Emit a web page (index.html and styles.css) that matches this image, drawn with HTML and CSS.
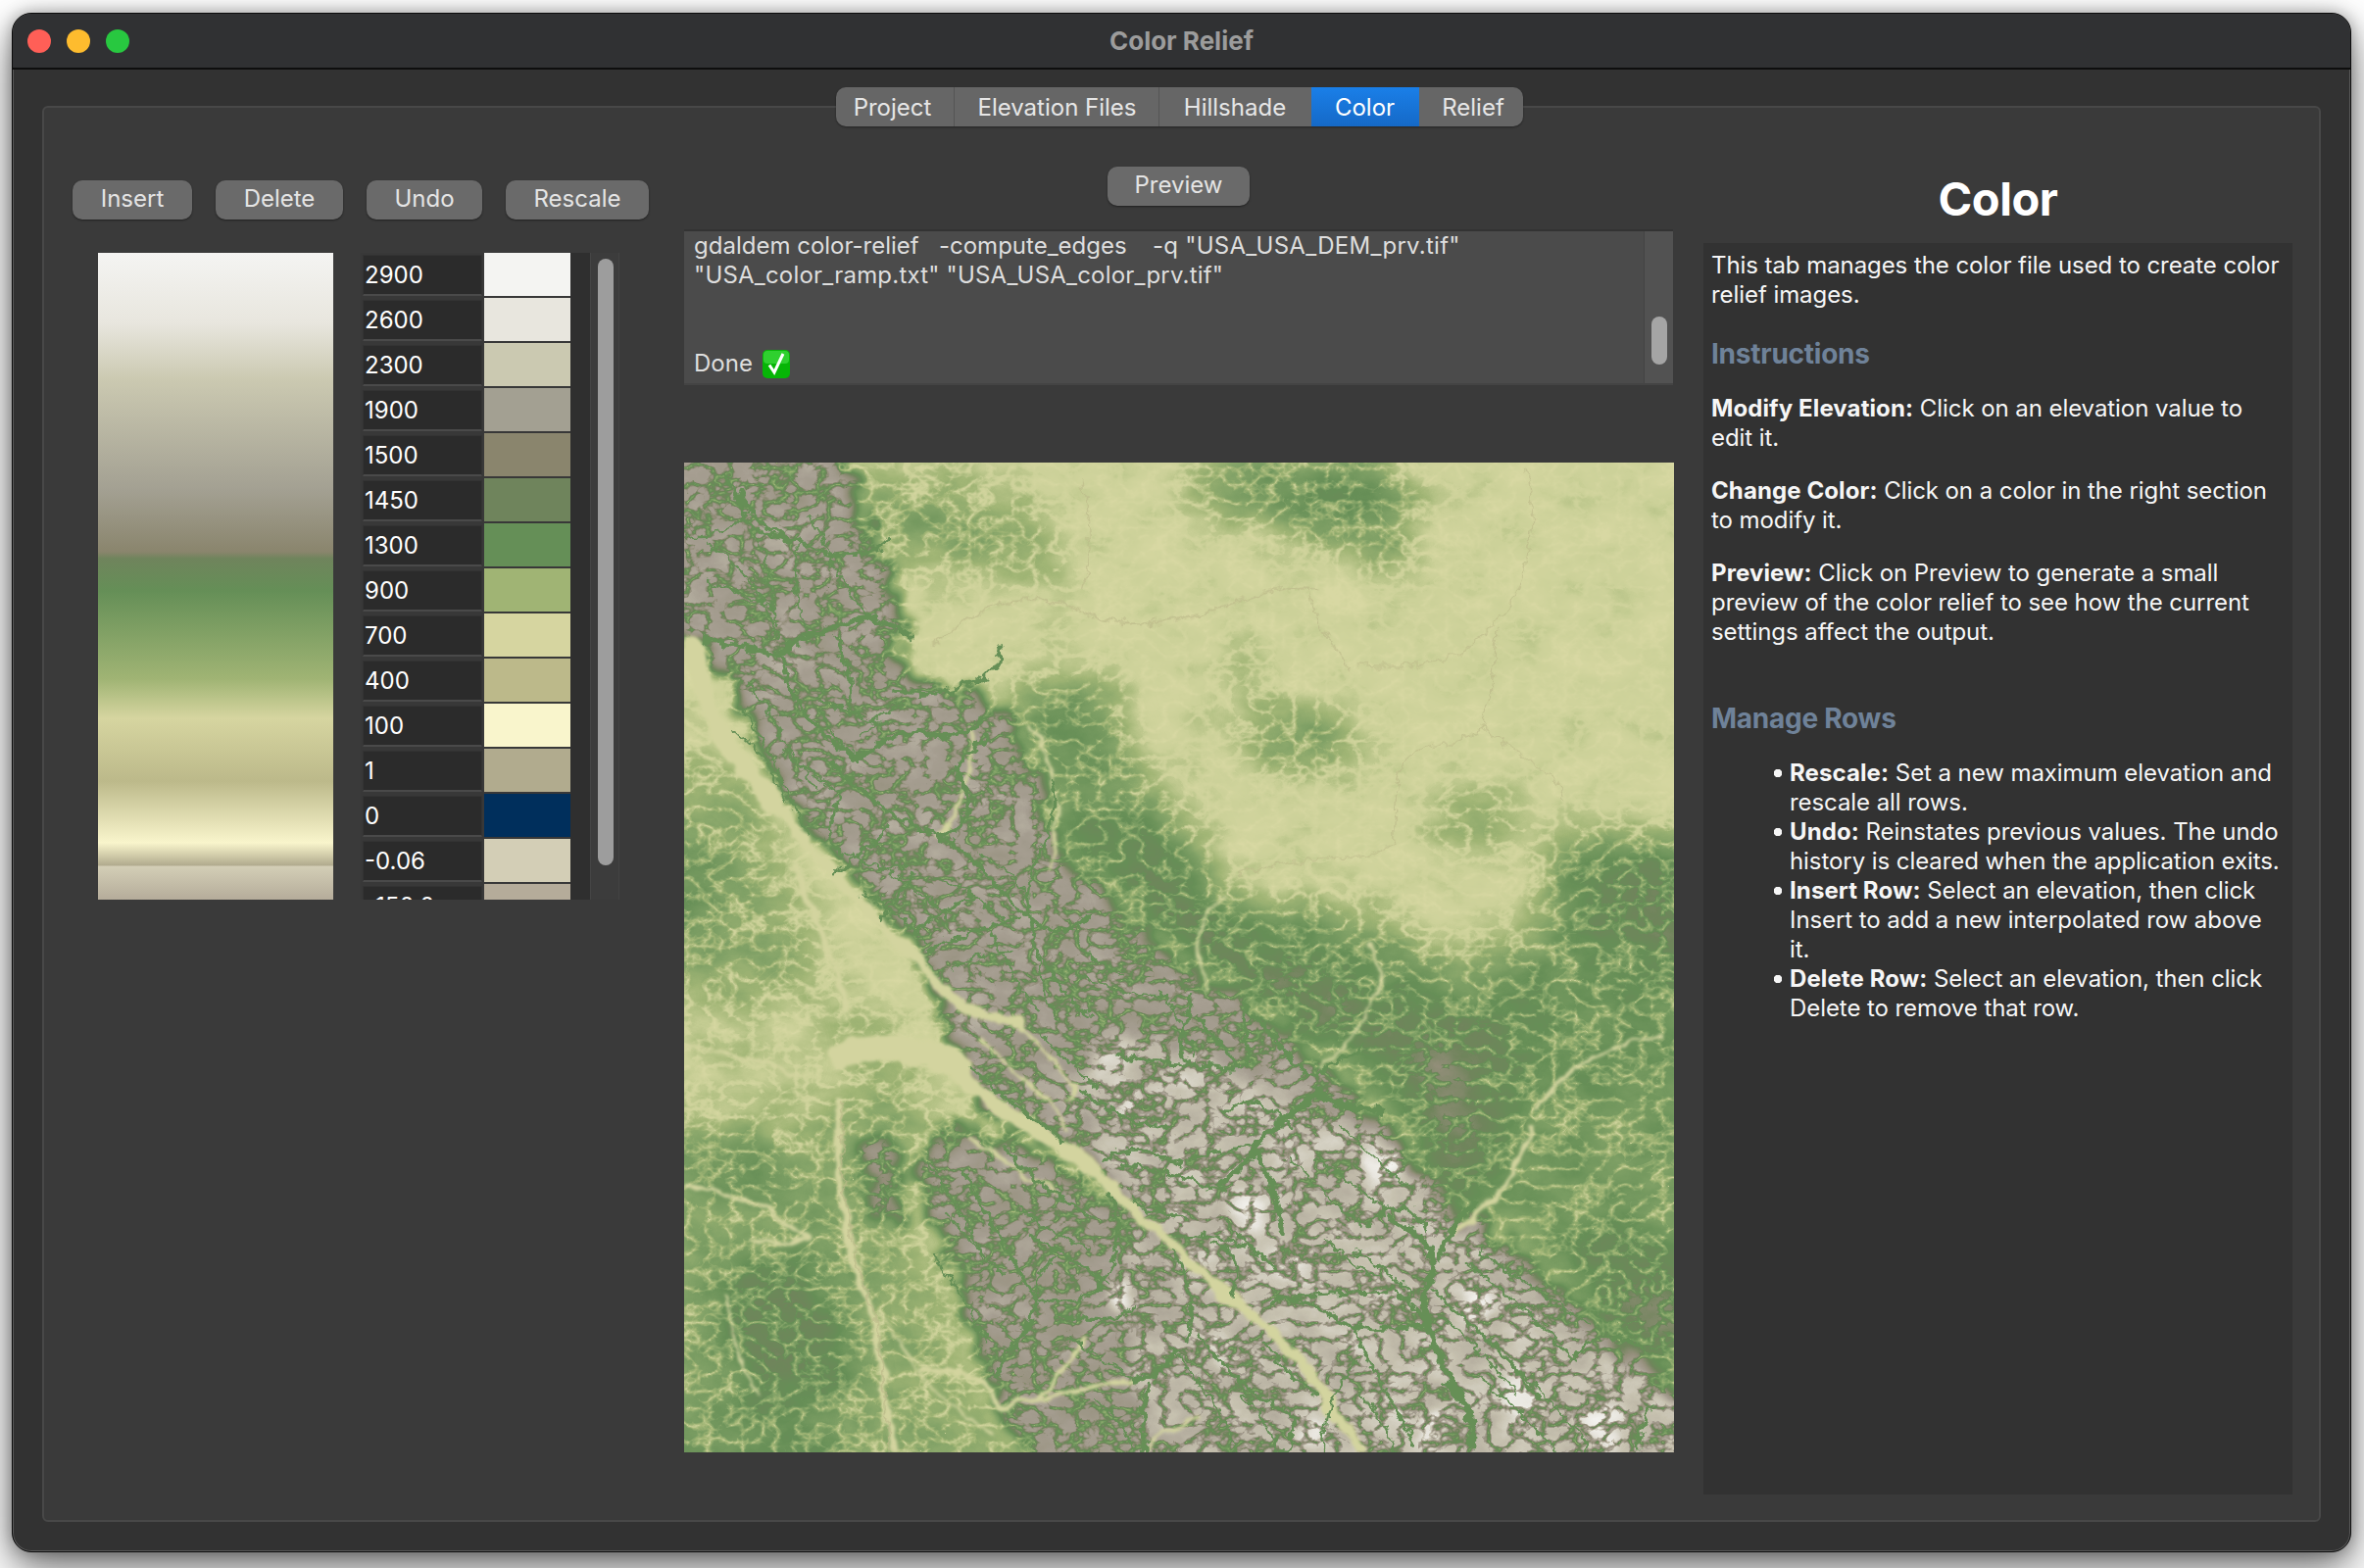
FILE: index.html
```html
<!DOCTYPE html>
<html lang="en">
<head>
<meta charset="utf-8">
<title>Color Relief</title>
<link rel="stylesheet" href="styles.css">
</head>
<body>
<div class="window">
  <header class="titlebar">
    <div class="lights"><span class="light red"></span><span class="light yellow"></span><span class="light green"></span></div>
    <div class="title">Color Relief</div>
  </header>
  <main class="content">
    <div class="group">
      <nav class="tabs">
        <span class="tab t1">Project</span><span class="tab t2">Elevation Files</span><span class="tab t3">Hillshade</span><span class="tab t4 active">Color</span><span class="tab t5">Relief</span>
      </nav>
      <div class="columns">
        <section class="left">
          <div class="buttons">
            <button class="btn b-insert">Insert</button>
            <button class="btn b-delete">Delete</button>
            <button class="btn b-undo">Undo</button>
            <button class="btn b-rescale">Rescale</button>
          </div>
          <div class="ramp">
            <div class="gradient"></div>
            <div class="table">
              <div class="rows">
                <div class="row"><span class="cell">2900</span><span class="swatch c01"></span></div>
                <div class="row"><span class="cell">2600</span><span class="swatch c02"></span></div>
                <div class="row"><span class="cell">2300</span><span class="swatch c03"></span></div>
                <div class="row"><span class="cell">1900</span><span class="swatch c04"></span></div>
                <div class="row"><span class="cell">1500</span><span class="swatch c05"></span></div>
                <div class="row"><span class="cell">1450</span><span class="swatch c06"></span></div>
                <div class="row"><span class="cell">1300</span><span class="swatch c07"></span></div>
                <div class="row"><span class="cell">900</span><span class="swatch c08"></span></div>
                <div class="row"><span class="cell">700</span><span class="swatch c09"></span></div>
                <div class="row"><span class="cell">400</span><span class="swatch c10"></span></div>
                <div class="row"><span class="cell">100</span><span class="swatch c11"></span></div>
                <div class="row"><span class="cell">1</span><span class="swatch c12"></span></div>
                <div class="row"><span class="cell">0</span><span class="swatch c13"></span></div>
                <div class="row"><span class="cell">-0.06</span><span class="swatch c14"></span></div>
                <div class="row"><span class="cell">-150.0</span><span class="swatch c15"></span></div>
              </div>
              <div class="gutter"></div>
              <div class="vscroll"><div class="vthumb"></div></div>
            </div>
          </div>
        </section>
        <section class="middle">
          <button class="btn b-preview">Preview</button>
          <div class="log">
            <div class="log-text">
              <div>gdaldem color-relief &nbsp;&nbsp;-compute_edges &nbsp;&nbsp;<span class="wide">-q "USA_USA_DEM_prv.tif"</span></div>
              <div class="line2">"USA_color_ramp.txt" "USA_USA_color_prv.tif"</div>
              <div class="done">Done
                <svg class="check" viewBox="0 0 28 29" aria-hidden="true"><rect width="28" height="29" rx="5" fill="#06b506"/><rect x="1" y="1" width="26" height="13" rx="4" fill="#2fd02f"/><path d="M7 15.5l5 7.5L21 4" fill="none" stroke="#fff" stroke-width="3"/></svg>
              </div>
            </div>
            <div class="log-scroll"><div class="log-thumb"></div></div>
          </div>
          <svg class="map" viewBox="27 18 1523 1523" aria-label="Color relief preview">
            <defs>
              <filter id="terrain" filterUnits="userSpaceOnUse" x="27" y="18" width="1523" height="1523" color-interpolation-filters="sRGB">
                <feTurbulence type="turbulence" baseFrequency="0.03 0.038" numOctaves="3" seed="11" result="t"/>
                <feColorMatrix in="t" type="matrix" values="3 0 0 0 0 3 0 0 0 0 3 0 0 0 0 0 0 0 0 1" result="n"/>
                <feComposite in="SourceGraphic" in2="n" operator="arithmetic" k1="0.72" k2="0.35" k3="0" k4="0" result="h0"/>
                <feTurbulence type="fractalNoise" baseFrequency="0.014 0.02" numOctaves="5" seed="21" result="f"/>
                <feColorMatrix in="f" type="matrix" values="1 0 0 0 0 1 0 0 0 0 1 0 0 0 0 0 0 0 0 1" result="fb"/>
                <feComposite in="h0" in2="fb" operator="arithmetic" k1="0" k2="1" k3="0.16" k4="-0.08" result="h"/>
                <feComponentTransfer in="h">
                  <feFuncR type="table" tableValues="0.85 0.80 0.63 0.50 0.40 0.44 0.58 0.65 0.78 0.91 0.98"/>
                  <feFuncG type="table" tableValues="0.85 0.82 0.71 0.63 0.56 0.52 0.56 0.62 0.76 0.90 0.98"/>
                  <feFuncB type="table" tableValues="0.64 0.60 0.46 0.40 0.34 0.36 0.48 0.57 0.69 0.87 0.97"/>
                  <feFuncA type="linear" slope="0" intercept="1"/>
                </feComponentTransfer>
              </filter>
              <filter id="broad" filterUnits="userSpaceOnUse" x="-100" y="-100" width="1800" height="1800" color-interpolation-filters="sRGB">
                <feTurbulence type="fractalNoise" baseFrequency="0.012" numOctaves="4" seed="3" result="d"/>
                <feDisplacementMap in="SourceGraphic" in2="d" scale="120" xChannelSelector="R" yChannelSelector="G" result="rough"/>
                <feGaussianBlur in="rough" stdDeviation="36"/>
              </filter>
              <filter id="crag" filterUnits="userSpaceOnUse" x="-100" y="-100" width="1800" height="1800" color-interpolation-filters="sRGB">
                <feTurbulence type="fractalNoise" baseFrequency="0.035" numOctaves="4" seed="6" result="d"/>
                <feDisplacementMap in="SourceGraphic" in2="d" scale="80" xChannelSelector="R" yChannelSelector="G" result="rough"/>
                <feGaussianBlur in="rough" stdDeviation="9"/>
              </filter>
              <filter id="wiggle" filterUnits="userSpaceOnUse" x="27" y="18" width="1523" height="1523">
                <feTurbulence type="fractalNoise" baseFrequency="0.06" numOctaves="3" seed="4" result="w"/>
                <feDisplacementMap in="SourceGraphic" in2="w" scale="20" xChannelSelector="R" yChannelSelector="G" result="d"/>
                <feGaussianBlur in="d" stdDeviation="0.7"/>
              </filter>
              <filter id="soft" filterUnits="userSpaceOnUse" x="27" y="18" width="1523" height="1523">
                <feTurbulence type="fractalNoise" baseFrequency="0.03" numOctaves="3" seed="9" result="w"/>
                <feDisplacementMap in="SourceGraphic" in2="w" scale="22" xChannelSelector="R" yChannelSelector="G" result="d"/>
                <feGaussianBlur in="d" stdDeviation="2.5"/>
              </filter>
            </defs>
            <g filter="url(#terrain)">
              <g filter="url(#broad)">
                <rect x="-100" y="-100" width="1800" height="1800" fill="#141414"/>
                <path d="M-100 430L120 500 240 800 420 1000 380 1200 600 1700H-100z" fill="#404040"/>
                <path d="M-100 620L80 640 120 720 -100 800z" fill="#5a5a5a"/>
                <path d="M-100 820L260 860 300 1010 200 1050 -100 1000z" fill="#1e1e1e"/>
                <path d="M60 1070L170 1070 190 1150 80 1160z" fill="#686868"/>
                <path d="M70 1240L260 1240 280 1460 100 1460z" fill="#747474"/>
                <path d="M-100 1480L240 1470 300 1700H-100z" fill="#5c5c5c"/>
                <path d="M810 30L1100 20 1180 70 1050 130 920 90 800 90z" fill="#686868"/>
                <path d="M1060 110L1210 170 1100 190z" fill="#606060"/>
                <path d="M250 30L500 40 620 200 470 190 320 150z" fill="#484848"/>
                <path d="M540 340L690 400 750 530 800 640 880 700 1100 720 1240 800 1320 760 1400 610 1700 640V1500L1340 1260 1100 1020 780 760 600 640z" fill="#5c5c5c"/>
                <path d="M610 590L800 640 880 760 1060 820 1080 960 760 760z" fill="#808080"/>
                <path d="M1100 860L1300 900 1240 1120 1300 1230 1150 1120z" fill="#848484"/>
                <path d="M1300 1000L1700 960V1180L1340 1160z" fill="#505050"/>
                <path d="M1360 1220L1700 1280V1500L1480 1380z" fill="#808080"/>
                <path d="M830 380L1000 400 1100 490 960 480z" fill="#606060"/>
                <path d="M1190 540L1300 530 1310 590 1200 590z" fill="#505050"/>
                <path d="M850 300L930 310 930 360 860 350z" fill="#404040"/>
                <path d="M1400 600L1700 640V800L1420 760z" fill="#787878"/>
              </g>
              <g filter="url(#crag)">
                <path d="M-100 -100H230L370 280 345 335 510 390 570 500 610 630 790 790 930 880 1110 1040 1200 1150 1700 1560V1700H1070L660 1110 470 1000 460 960 400 790 200 560 60 300-100 285z" fill="#a6a6a6"/>
                <path d="M460 1030L620 1110 780 1240 910 1370 1050 1700H620L500 1440 440 1250 380 1100z" fill="#a4a4a4"/>
                <path d="M300 1060L350 1060 360 1190 310 1180z" fill="#9a9a9a"/>
                <path d="M680 900L800 920 1110 1060 1200 1170 1700 1600V1700H1100L690 1110 620 1000z" fill="#bebebe"/>
                <path d="M700 1170L800 1260 930 1400 1040 1700H740z" fill="#b8b8b8"/>
                <g class="snow">
                  <circle cx="680" cy="935" r="14"/><circle cx="710" cy="1000" r="16"/><circle cx="900" cy="1170" r="18"/><circle cx="950" cy="1260" r="24"/><circle cx="850" cy="1380" r="26"/><circle cx="700" cy="1300" r="18"/><circle cx="1160" cy="1500" r="20"/><circle cx="1310" cy="1450" r="32"/><circle cx="1440" cy="1500" r="32"/><circle cx="990" cy="1510" r="20"/><circle cx="1100" cy="1100" r="20"/><circle cx="1250" cy="1320" r="22"/>
                </g>
              </g>
            </g>
            <g class="pale" filter="url(#soft)">
              <path class="w30" d="M40 300C55 400 100 470 165 540"/>
              <path class="w16" d="M165 540C230 640 330 720 400 800S500 870 540 880"/>
              <path class="w10" d="M200 640C230 720 260 790 280 860"/>
              <path class="w40" d="M270 930C340 910 410 920 450 950"/>
              <path class="w24" d="M450 960C540 1040 610 1060 660 1110"/>
              <path class="w16" d="M660 1110C720 1170 790 1240 900 1330S990 1430 1070 1540"/>
              <path class="w6" d="M27 915C80 920 130 935 200 960"/>
              <path class="w10" d="M265 1000C260 1100 270 1200 300 1280S330 1440 350 1540"/>
              <path class="w6" d="M30 1130C90 1140 150 1150 190 1190S240 1210 130 1220"/>
              <path class="w4" d="M90 1300C100 1360 120 1400 135 1450"/>
              <path class="w4" d="M330 1330C370 1400 420 1470 500 1510"/>
              <path class="w8" d="M390 1410C440 1415 490 1415 510 1470 560 1460 620 1450 720 1430"/>
              <path class="w8" d="M640 1370C610 1410 590 1440 570 1460"/>
              <path class="w6" d="M740 1540C750 1510 790 1500 820 1490"/>
              <path class="w6" d="M1340 1010C1370 960 1430 920 1530 900"/>
              <path class="w8" d="M1210 1210C1260 1160 1300 1130 1330 1040"/>
              <path class="w4" d="M1080 760C1120 810 1100 860 1010 950"/>
              <path class="w4" d="M860 690C820 710 810 740 830 830"/>
              <path class="w6" d="M470 430C470 500 450 560 420 595"/>
              <path class="w5" d="M560 420C600 510 610 560 590 640"/>
              <path class="w6" d="M470 1060C520 1090 560 1120 600 1140"/>
              <path class="w5" d="M480 900C540 960 590 1000 620 1040M530 870C590 930 650 980 620 1000"/>
            </g>
            <g class="tan" filter="url(#wiggle)">
              <path class="w3" d="M410 300C480 240 540 210 620 240S700 270 780 260 930 200 1000 210"/>
              <path class="w2" d="M640 50C660 130 650 180 640 210M1320 30C1350 120 1320 220 1270 270S1180 340 1060 330"/>
              <path class="w2" d="M1250 430C1200 460 1160 450 1140 470S1120 570 1120 600 980 620 880 650"/>
              <path class="w2" d="M1250 430C1280 360 1270 320 1280 270M1250 420C1300 470 1370 480 1380 540M990 210C1000 290 1040 300 1050 340"/>
              <path class="w3" d="M270 1000C265 1120 280 1220 310 1300S330 1480 345 1540"/>
            </g>
            <g class="grn" filter="url(#wiggle)">
              <path class="w7" d="M60 290C100 300 140 300 175 315 200 280 280 270 310 255 340 265 360 275 375 285"/>
              <path class="w4" d="M90 40C110 80 180 150 205 135 230 170 300 170 340 140M120 60C100 100 130 130 205 140"/>
              <path class="w4" d="M175 315C190 380 230 440 290 470M260 285C280 330 290 370 280 395"/>
              <path class="w6" d="M290 475C330 450 360 425 400 435S470 430 490 410"/>
              <path class="w4" d="M350 370C400 380 440 370 490 350 510 330 520 310 515 300"/>
              <path class="w5" d="M420 595C460 580 475 550 455 510S480 460 490 440"/>
              <path class="w4" d="M255 480C290 520 340 560 420 595S500 680 560 720 640 720 650 715"/>
              <path class="w3" d="M270 530C250 570 240 600 270 620M340 580C300 620 270 640 260 650M380 650C360 690 340 700 330 720"/>
              <path class="w3" d="M590 510C610 560 580 610 560 650 550 690 560 720 570 770 590 800 620 850 650 870"/>
              <path class="w3" d="M400 770C440 750 470 740 540 720M380 740C410 720 430 700 470 690"/>
              <path class="w4" d="M470 950C510 990 570 1030 610 1060"/>
              <path class="w4" d="M640 985C680 1020 730 1040 770 1040M670 1090C700 1080 720 1060 790 1100"/>
              <path class="w4" d="M700 930C760 950 800 940 860 950S880 880 890 850M820 870C830 900 860 910 880 950"/>
              <path class="w4" d="M810 840C800 870 780 920 800 940M1000 960C1020 940 1050 930 1070 920M900 870C950 900 960 960 1000 960"/>
              <path class="w9" d="M905 1070C930 1040 980 1010 1000 985 1030 1010 1060 1010 1100 1015"/>
              <path class="w7" d="M905 1070C920 1110 940 1130 945 1200M905 1075C880 1110 860 1120 850 1130"/>
              <path class="w3" d="M800 1090C850 1080 880 1070 905 1070M960 1040C920 1000 890 990 860 1020"/>
              <path class="w7" d="M1165 1300C1190 1250 1190 1220 1110 1180M1190 1240C1200 1200 1215 1190 1240 1160"/>
              <path class="w9" d="M1165 1300C1160 1340 1190 1390 1200 1420S1245 1470 1240 1530"/>
              <path class="w4" d="M1165 1345C1120 1350 1080 1360 1040 1340S960 1290 930 1310M1170 1200C1150 1160 1120 1150 1080 1190"/>
              <path class="w3" d="M1060 1350C1080 1420 1120 1460 1150 1530M1180 1290C1240 1350 1300 1390 1340 1460"/>
              <path class="w3" d="M780 1230C800 1280 820 1320 800 1370M870 1300C880 1260 880 1230 840 1220M790 1210C850 1200 900 1220 940 1260"/>
              <path class="w3" d="M930 1310C990 1290 1060 1300 1120 1290 1140 1310 1150 1320 1165 1330"/>
              <path class="w3" d="M680 1140C710 1210 690 1260 660 1290S580 1310 570 1300"/>
              <path class="w3" d="M700 1100C760 1100 820 1130 860 1140M720 1150C740 1180 770 1170 800 1180"/>
              <path class="w4" d="M460 1110C490 1180 540 1250 570 1310 560 1350 520 1390 510 1420"/>
              <path class="w3" d="M520 1070C560 1130 640 1170 660 1180M560 1210C620 1240 650 1260 680 1280M600 1330C650 1340 690 1340 720 1320"/>
              <path class="w5" d="M740 1440C735 1480 730 1510 735 1540M720 1430C760 1420 770 1410 780 1380"/>
              <path class="w3" d="M820 1360C860 1420 910 1460 960 1480 970 1510 960 1530 950 1540M920 1370C940 1410 980 1440 1000 1450"/>
              <path class="w3" d="M1400 1390C1430 1350 1470 1360 1500 1380M1520 1470C1500 1490 1495 1520 1495 1540"/>
              <path class="w2" d="M1300 1400C1360 1470 1400 1500 1420 1540M1060 1400C1020 1450 1010 1500 1010 1540"/>
              <path class="w2" d="M130 360C170 420 190 470 230 520M110 390C150 440 180 520 220 590M230 380C280 400 310 420 340 420"/>
              <path class="w2" d="M120 100C170 180 160 220 170 270M60 140C110 180 150 210 170 290M220 100C260 180 290 240 310 250"/>
              <path class="w2" d="M480 620C520 640 540 660 550 680M420 660C470 680 490 700 520 720M620 800C680 830 720 840 770 840"/>
              <path class="w2" d="M30 130C70 140 100 120 130 90M60 200C100 210 130 230 165 240M205 135C190 180 200 230 215 280M290 475C260 450 250 420 235 400M300 440C320 410 340 400 360 390"/>
              <path class="w2" d="M100 430C130 440 160 480 180 540M180 460C220 500 260 520 270 530M260 610C310 640 340 650 370 640M330 640C360 660 400 680 430 720M300 680C340 700 370 720 400 760"/>
              <path class="w2" d="M440 800C470 780 500 770 530 770M500 740C530 800 540 820 570 860M560 720C580 800 570 830 600 880M620 720C640 770 660 790 700 810M760 830C790 880 800 900 810 930M580 900C620 950 650 960 660 980"/>
              <path class="w2" d="M1000 1090C1050 1120 1080 1150 1110 1170M960 1090C1000 1130 1040 1170 1070 1190M1040 1040C1080 1080 1120 1120 1140 1130M1230 1250C1290 1290 1340 1340 1400 1400M1250 1230C1310 1270 1370 1320 1420 1340"/>
              <path class="w2" d="M1190 1330C1240 1370 1280 1420 1310 1450M1240 1420C1290 1450 1330 1500 1370 1540M1060 1230C1100 1260 1130 1280 1150 1300M1010 1210C1040 1240 1080 1270 1100 1270M860 1180C890 1220 900 1230 920 1240"/>
              <path class="w2" d="M620 1360C660 1400 700 1410 720 1430M780 1380C820 1440 850 1470 880 1540M660 1460C700 1490 710 1510 720 1540M1060 1440C1100 1490 1110 1510 1120 1540M880 1440C920 1490 930 1510 940 1540"/>
              <path class="w2" d="M430 1170C460 1210 490 1240 520 1270M400 1090C430 1130 470 1200 490 1250M410 1240C450 1290 480 1340 490 1370M540 1160C580 1200 620 1210 650 1230M600 1240C560 1280 570 1290 570 1300"/>
            </g>
          </svg>
        </section>
        <aside class="right">
          <h1 class="help-title">Color</h1>
          <div class="help">
            <p>This tab manages the color file used to create color relief images.</p>
            <h2>Instructions</h2>
            <p><b>Modify Elevation:</b> Click on an elevation value to edit it.</p>
            <p><b>Change Color:</b> Click on a color in the right section to modify it.</p>
            <p><b>Preview:</b> Click on Preview to generate a small preview of the color relief to see how the current settings affect the output.</p>
            <h2 class="h-manage">Manage Rows</h2>
            <ul>
              <li><b>Rescale:</b> Set a new maximum elevation and rescale all rows.</li>
              <li><b>Undo:</b> Reinstates previous values. The undo history is cleared when the application exits.</li>
              <li><b>Insert Row:</b> Select an elevation, then click Insert to add a new interpolated row above it.</li>
              <li><b>Delete Row:</b> Select an elevation, then click Delete to remove that row.</li>
            </ul>
          </div>
        </aside>
      </div>
    </div>
  </main>
</div>
</body>
</html>
```

FILE: styles.css
```css
* { box-sizing: border-box; }
html, body { margin: 0; height: 1600px; }
body {
  background: #fff;
  padding: 13px 13px 16px 12px;
  font-family: Inter, "Liberation Sans", sans-serif;
  font-size: 24px;
  overflow: hidden;
}
.window {
  height: 1571px;
  display: flex;
  flex-direction: column;
  background: #323232;
  border: 1px solid #0c0c0c;
  border-radius: 20px;
  box-shadow: 0 18px 44px rgba(0,0,0,.55), 0 0 16px rgba(0,0,0,.3), inset 0 0 0 1px #5a5a5a;
  overflow: hidden;
}
.titlebar {
  height: 57px;
  flex: none;
  display: flex;
  align-items: center;
  justify-content: center;
  position: relative;
  background: #303133;
  border-bottom: 2px solid #0e0e0e;
}
.lights { position: absolute; left: 15px; top: 16px; display: flex; gap: 16px; }
.light { width: 24px; height: 24px; border-radius: 50%; }
.red { background: #ff5f57; }
.yellow { background: #febc2e; }
.green { background: #28c840; }
.title { color: #9c9c9c; font-weight: 700; font-size: 26px; letter-spacing: 0; }
.content { flex: 1; display: flex; padding: 37px 30px 30px 30px; min-height: 0; }
.group {
  flex: 1;
  display: flex;
  flex-direction: column;
  border: 2px solid #484848;
  border-radius: 6px;
  background: #3a3a3a;
}
.tabs {
  display: flex;
  align-self: center;
  height: 40px;
  margin-top: -21px;
  margin-left: -5px;
  background: #666;
  border-radius: 10px;
  overflow: hidden;
  box-shadow: 0 1px 2px rgba(0,0,0,.4);
  color: #e6e6e6;
}
.tab {
  display: flex;
  align-items: center;
  justify-content: center;
  border-right: 1px solid #555;
}
.t1 { width: 121px; padding-right: 4px; }
.t2 { width: 209px; padding-left: 2px; }
.t3 { width: 155px; border-right: 0; }
.t4 { width: 110px; border-right: 0; }
.t5 { width: 106px; border-right: 0; padding-left: 5px; }
.active { background: linear-gradient(#1a7fe8, #1569c7); color: #fff; }
.columns {
  flex: 1;
  display: grid;
  grid-template-columns: 588px 1009px 601px;
  column-gap: 36px;
  padding: 41px 0 0 29px;
  min-height: 0;
}
.left { padding-top: 14px; }
.buttons { display: flex; justify-content: space-between; }
.btn {
  height: 40px;
  padding: 0 0 3px;
  border: 0;
  border-radius: 10px;
  background: #6a6a6a;
  box-shadow: 0 1px 2px rgba(0,0,0,.45);
  color: #e4e4e4;
  font: inherit;
}
.b-insert { width: 122px; }
.b-delete { width: 130px; }
.b-undo { width: 118px; }
.b-rescale { width: 146px; }
.b-preview { width: 145px; display: block; margin: 0 auto 24px; }
.ramp { display: flex; margin: 34px 0 0 26px; gap: 28px; align-items: flex-start; }
.gradient {
  width: 240px;
  height: 660px;
  background: linear-gradient(#f4f4f2 0, #e8e6de 72px, #cbc9b1 129px, #a3a092 242px, #8a856d 305px, #6f845c 312px, #658f57 345px, #a0b474 435px, #d6d5a0 475px, #bcb98a 539px, #f9f5cc 602px, #b1ab8e 625px, #d3ceb6 626px, #b5ac9a 660px);
}
.table {
  width: 264px;
  height: 660px;
  overflow: hidden;
  display: flex;
  background: #383838;
}
.rows { width: 214px; flex: none; padding-left: 2px; }
.row { height: 46px; display: flex; }
.cell {
  width: 122px;
  height: 42px;
  margin-top: 2px;
  padding-left: 1px;
  display: flex;
  align-items: center;
  background: #2b2b2b;
  border: 1px solid #333;
  border-bottom: 2px solid #4a4a4a;
  color: #fff;
  font-size: 24px;
}
.swatch { width: 88px; height: 44px; margin-left: 2px; }
.c01 { background: #f4f4f2; }
.c02 { background: #e8e6de; }
.c03 { background: #cbc9b1; }
.c04 { background: #a3a092; }
.c05 { background: #8a856d; }
.c06 { background: #6f845c; }
.c07 { background: #658f57; }
.c08 { background: #a0b474; }
.c09 { background: #d6d5a0; }
.c10 { background: #bcb98a; }
.c11 { background: #f9f5cc; }
.c12 { background: #b1ab8e; }
.c13 { background: #002f5c; }
.c14 { background: #d3ceb6; }
.c15 { background: #b5ac9a; }
.gutter { width: 20px; background: #2f2f2f; }
.vscroll {
  width: 30px;
  padding: 6px 0 0 7px;
  background: #3c3c3c;
  border-left: 1px solid #454545;
  border-right: 1px solid #444;
}
.vthumb { width: 16px; height: 619px; border-radius: 8px; background: #9d9d9d; }
.log {
  height: 159px;
  display: flex;
  background: #4b4b4b;
  border-top: 2px solid #333;
  border-bottom: 2px solid #444;
  margin-bottom: 79px;
}
.log-text { flex: 1; padding: 0 0 0 10px; color: #dedede; line-height: 30px; }
.wide { margin-left: 6px; letter-spacing: .27px; }
.line2 { letter-spacing: .2px; }
.done { margin-top: 60px; display: flex; align-items: center; gap: 10px; height: 30px; }
.check { width: 28px; height: 29px; }
.log-scroll { width: 30px; padding: 87px 0 0 7px; background: #525252; border-left: 1px solid #444; }
.log-thumb { width: 16px; height: 49px; border-radius: 8px; background: #a5a5a5; }
.map { display: block; width: 1010px; height: 1010px; }
.snow circle { fill: #e4e4e4; }
.pale path, .tan path, .grn path { fill: none; stroke-linecap: round; stroke-linejoin: round; }
.pale path { stroke: #d3d49f; }
.tan path { stroke: #bcb98a; opacity: .7; }
.grn path { stroke: #668f57; }
.w2 { stroke-width: 2; }
.w3 { stroke-width: 3; }
.w4 { stroke-width: 4; }
.w5 { stroke-width: 5; }
.w6 { stroke-width: 6; }
.w7 { stroke-width: 7; }
.w8 { stroke-width: 8; }
.w9 { stroke-width: 9; }
.w10 { stroke-width: 10; }
.w12 { stroke-width: 12; }
.w16 { stroke-width: 16; }
.w24 { stroke-width: 24; }
.w30 { stroke-width: 30; }
.w40 { stroke-width: 40; }
.grn .w2 { stroke-width: 3.5; }
.grn .w3 { stroke-width: 5; }
.grn .w4 { stroke-width: 6; }
.grn .w5 { stroke-width: 7; }
.grn .w6 { stroke-width: 8; }
.grn .w7 { stroke-width: 9; }
.grn .w9 { stroke-width: 11; }
.right { display: flex; flex-direction: column; margin: 0 5px 0 -5px; }
.help-title { height: 65px; margin: 0 0 13px; display: flex; align-items: center; justify-content: center; color: #fff; font-size: 47px; font-weight: 700; letter-spacing: -.5px; }
.help {
  height: 1277px;
  padding: 8px 8px;
  background: #323232;
  color: #f6f6f6;
  line-height: 30px;
  font-size: 24px;
  letter-spacing: -.07px;
}
.help p { margin: 0 0 24px; }
.help h2 { margin: 28px 0 24px; color: #6f8299; font-size: 28px; line-height: 34px; font-weight: 700; letter-spacing: -.25px; }
.help .h-manage { margin-top: 56px; }
.help ul { margin: 0; padding: 0 0 0 63px; list-style: none; }
.help li { padding-left: 17px; background: radial-gradient(circle 4.5px at 5px 15px, #f6f6f6 90%, transparent 100%) no-repeat; }
.help b { font-weight: 700; letter-spacing: .1px; }
```
